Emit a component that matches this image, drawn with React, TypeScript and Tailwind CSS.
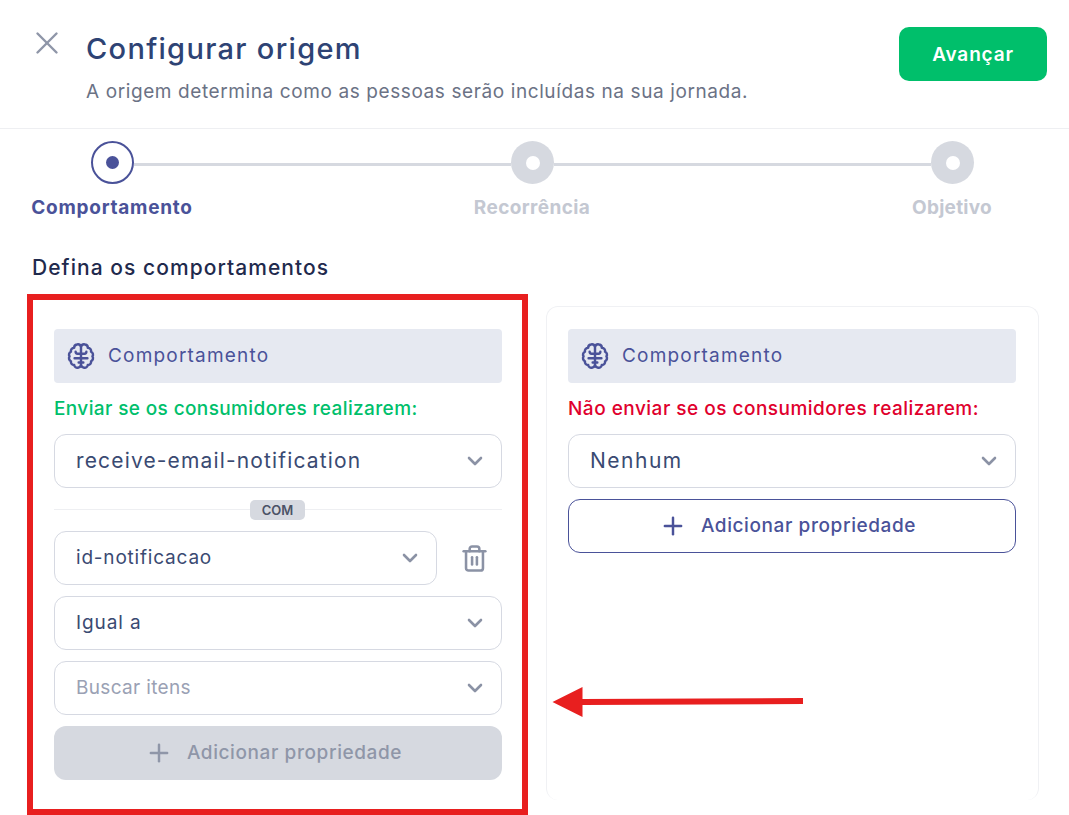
import React from 'react';
import { X, ChevronDown, Plus, Trash2 } from 'lucide-react';

const font = { fontFamily: 'Inter, "Open Sans", sans-serif' };

const Select = ({ value, muted, textClass, className = '' }: { value: string; muted?: boolean; textClass: string; className?: string }) => (
  <div className={`h-[54px] shrink-0 flex items-center justify-between pl-[21px] pr-[14px] bg-white border border-[#d6d9e2] rounded-[12px] ${className}`}>
    <span className={`${textClass} ${muted ? 'text-[#9aa1b4]' : 'text-[#3a4a72]'}`}>{value}</span>
    <ChevronDown size={24} strokeWidth={2.6} className="text-[#8b92a5]" />
  </div>
);

// no matching icon in the packages, so drawn by hand
const BrainIcon = () => (
  <svg width="28" height="28" viewBox="0 0 24 24" fill="none" stroke="currentColor" strokeWidth="2.1" strokeLinecap="round" strokeLinejoin="round">
    <path d="M12 4C11.5 2.6 10 1.7 8.5 2.1C7 2.4 6.1 3.6 6.2 4.9C4.3 4.9 3 6.5 3.4 8.3C1.8 9.1 1.2 11 2.2 12.3C1.2 13.8 1.8 15.8 3.4 16.5C3.1 18.3 4.4 19.8 6.2 19.7C6.3 21.2 7.8 22.3 9.3 22C10.6 21.8 11.6 21 12 19.8C12.4 21 13.4 21.8 14.7 22C16.2 22.3 17.7 21.2 17.8 19.7C19.6 19.8 20.9 18.3 20.6 16.5C22.2 15.8 22.8 13.8 21.8 12.3C22.8 11 22.2 9.1 20.6 8.3C21 6.5 19.7 4.9 17.8 4.9C17.9 3.6 17 2.4 15.5 2.1C14 1.7 12.5 2.6 12 4Z" />
    <path d="M12 4V19.8M12 10H9C8 10 7.4 9.3 7.4 8.4M12 10H15C16 10 16.6 9.3 16.6 8.4M12 14H6.5M12 14H17.5M12 17.5H10M12 17.5H14" />
  </svg>
);

const BehaviorHeader = () => (
  <div className="h-[54px] shrink-0 flex items-center gap-[13px] pl-[13px] bg-[#e6e9f1] rounded-[4px] text-[#4a5299]">
    <BrainIcon />
    <span className="text-[19px] tracking-[1.2px]">Comportamento</span>
  </div>
);

const AddButton = ({ className }: { className: string }) => (
  <button className={`mt-[11px] h-[54px] shrink-0 rounded-[12px] pr-[9px] flex items-center justify-center gap-[14px] text-[19px] font-medium tracking-[0.6px] ${className}`}>
    <Plus size={28} strokeWidth={2.1} />
    Adicionar propriedade
  </button>
);

const Step = ({ active }: { active?: boolean }) =>
  active ? (
    <div className="w-[43px] h-[43px] shrink-0 rounded-full border-2 border-[#4a5299] bg-white flex items-center justify-center">
      <div className="w-[13px] h-[13px] rounded-full bg-[#4a5299]" />
    </div>
  ) : (
    <div className="w-[43px] h-[43px] shrink-0 rounded-full bg-[#d6d9e0] flex items-center justify-center">
      <div className="w-[14px] h-[14px] rounded-full bg-white" />
    </div>
  );

export default function App() {
  return (
    <div className="relative w-[1069px] h-[815px] overflow-hidden bg-white" style={font}>
      {/* Header */}
      <div className="h-[129px] flex border-b border-[#eeeff2] pl-[28px] pr-[22px]">
        <X size={38} strokeWidth={1.55} className="text-[#8f96a8] mt-[24px] shrink-0" />
        <div className="ml-[20px] flex-1 pt-[28px]">
          <h1 className="text-[29px] leading-[42px] font-medium tracking-[1.3px] text-[#2e4374]">Configurar origem</h1>
          <p className="text-[19px] leading-[28px] mt-[8px] tracking-[0.6px] text-[#6b7285]">A origem determina como as pessoas serão incluídas na sua jornada.</p>
        </div>
        <button className="mt-[27px] w-[148px] h-[54px] pt-[2px] rounded-[10px] bg-[#00bf6b] text-white text-[19px] font-semibold tracking-[0.85px]">Avançar</button>
      </div>

      {/* Stepper */}
      <div className="pt-[12px]">
        <div className="flex items-center pl-[91px] pr-[95px]">
          <Step active />
          <div className="flex-1 h-[3px] bg-[#d6d9e0] mt-[4px]" />
          <Step />
          <div className="flex-1 h-[3px] bg-[#d6d9e0] mt-[4px]" />
          <Step />
        </div>
        <div className="flex justify-between pl-[12px] pr-[17px] mt-[10px] text-[19px] leading-[28px] font-bold">
          <span className="w-[200px] text-center text-[#4a5299] tracking-[0.75px]">Comportamento</span>
          <span className="w-[200px] text-center text-[#c4c8d2] tracking-[0.4px]">Recorrência</span>
          <span className="w-[200px] text-center text-[#c4c8d2] tracking-[0.25px]">Objetivo</span>
        </div>
      </div>

      <h2 className="ml-[32px] mt-[31px] text-[21px] leading-[30px] font-medium tracking-[1.05px] text-[#1f2a4d]">Defina os comportamentos</h2>

      {/* Cards */}
      <div className="flex gap-[22px] ml-[32px] mt-[23px]">
        <div className="w-[492px] h-[494px] px-[21px] pt-[22px] flex flex-col border border-transparent">
          <BehaviorHeader />
          <div className="mt-[14px] mb-[13px] h-[24px] leading-[24px] text-[19px] font-medium tracking-[0.38px] text-[#00bf6b]">Enviar se os consumidores realizarem:</div>
          <Select value="receive-email-notification" textClass="text-[21px] tracking-[1.15px]" />
          <div className="relative h-[43px] shrink-0 flex items-center">
            <div className="w-full h-px bg-[#eeeff2]" />
            <span className="absolute left-[196px] top-[12px] w-[55px] h-[20px] rounded-[5px] bg-[#d6d9e0] text-[#4b5266] text-[13px] font-semibold leading-[20px] text-center">COM</span>
          </div>
          <div className="flex items-center">
            <Select value="id-notificacao" textClass="text-[19px] tracking-[0.8px]" className="w-[383px]" />
            <Trash2 size={29} strokeWidth={2.1} className="text-[#8b92a5] ml-[23px]" />
          </div>
          <Select value="Igual a" textClass="text-[19px] tracking-[0.9px]" className="mt-[11px]" />
          <Select value="Buscar itens" muted textClass="text-[19px] tracking-[0.33px]" className="mt-[11px]" />
          <AddButton className="bg-[#d6d9e0] text-[#8f96a8]" />
        </div>

        <div className="w-[493px] h-[494px] pl-[21px] pr-[22px] pt-[22px] flex flex-col border border-b-0 border-[#f0f1f4] rounded-[12px]">
          <BehaviorHeader />
          <div className="mt-[14px] mb-[13px] h-[24px] leading-[24px] text-[19px] font-medium tracking-[0.49px] text-[#e0002d]">Não enviar se os consumidores realizarem:</div>
          <Select value="Nenhum" textClass="text-[21px] tracking-[1.5px]" />
          <AddButton className="bg-white border border-[#4a5299] text-[#4a5299]" />
        </div>
      </div>

      {/* Annotation drawn over the screenshot */}
      <div className="absolute left-[27px] top-[294px] w-[501px] h-[521px] border-[6px] border-[#e81f1f] pointer-events-none" />
      <svg className="absolute left-[550px] top-[684px]" width="256" height="36" viewBox="0 0 256 36">
        <path d="M2.5 18L32.5 3V15L253 14V20L32.5 21V33Z" fill="#e81f1f" />
      </svg>
    </div>
  );
}
